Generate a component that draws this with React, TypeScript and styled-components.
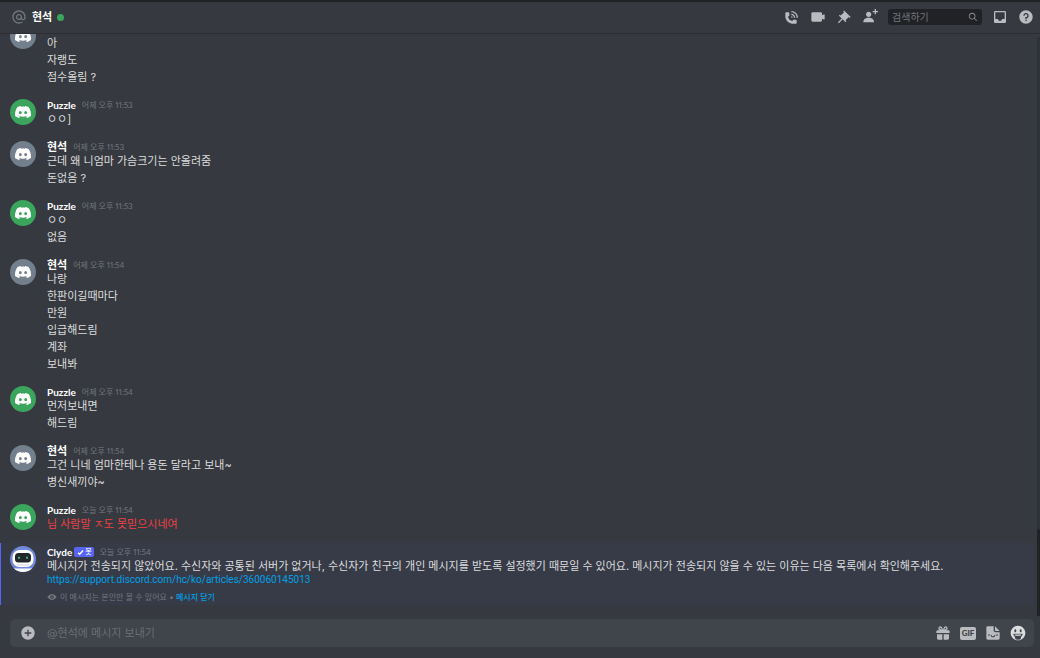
import React from 'react';
import styled, { createGlobalStyle } from 'styled-components';
import { SiDiscord } from 'react-icons/si';

const GlobalStyle = createGlobalStyle`
  * { box-sizing: border-box; }
  body {
    margin: 0;
    background: #36393f;
    color: #dcddde;
    font-family: Inter, "Noto Sans CJK KR", sans-serif;
    font-size: 11px;
    line-height: 14px;
  }
  button, input { font: inherit; color: inherit; border: 0; padding: 0; background: none; outline: none; }
  button { cursor: pointer; display: flex; }
  a { color: #00a0e8; text-decoration: none; }
  svg { display: block; flex: none; }
`;

const Page = styled.div`
  display: flex;
  flex-direction: column;
  height: 100vh;
  border-top: 2px solid #202225;
`;

const Header = styled.header`
  display: flex;
  align-items: center;
  gap: 10px;
  height: 32px;
  flex: none;
  padding: 0 6px 1px 11px;
  border-bottom: 1px solid #2c2e33;
  color: #b9bbbe;
`;

const Title = styled.h1`
  display: flex;
  align-items: center;
  gap: 5px;
  flex: 1;
  margin: 0;
  font-size: 11px;
  line-height: 14px;
  font-weight: 700;
  color: #fff;
`;

const Online = styled.span`
  width: 7px;
  height: 7px;
  border-radius: 50%;
  background: #3ba55d;
`;

const Search = styled.label`
  display: flex;
  align-items: center;
  width: 94px;
  height: 16px;
  padding: 0 4px;
  border-radius: 3px;
  background: #202225;
  color: #8e9297;
  input {
    flex: 1;
    min-width: 0;
    font-size: 10px;
    line-height: 14px;
  }
  input::placeholder { color: #72767d; opacity: 1; }
`;

const Body = styled.div`
  display: flex;
  flex: 1;
  min-height: 0;
`;

const Log = styled.ol`
  display: flex;
  flex-direction: column;
  justify-content: flex-end;
  flex: 1;
  min-width: 0;
  margin: 0;
  padding: 0 0 14px;
  list-style: none;
  overflow: hidden;
`;

const Track = styled.div`
  display: flex;
  flex-direction: column;
  justify-content: flex-end;
  width: 3px;
  margin: 3px 0 3px 3px;
  border-radius: 2px;
  background: #2e3338;
`;

const Thumb = styled.div`
  height: 15%;
  border-radius: 2px;
  background: #202225;
`;

const Group = styled.li<{ $ephemeral?: boolean }>`
  display: flex;
  flex: none;
  gap: 11px;
  padding: 0 10px;
  margin-bottom: 14px;
  ${p => p.$ephemeral && `
    margin: -2px 0 0;
    padding: 2px 10px 1px 9px;
    border-left: 1px solid #5865f2;
    background: #373b47;
  `}
`;

const Avatar = styled.span<{ $color: string }>`
  display: flex;
  align-items: center;
  justify-content: center;
  flex: none;
  width: 26px;
  height: 26px;
  margin-top: 1px;
  border-radius: 50%;
  overflow: hidden;
  background: ${p => p.$color};
  color: #fff;
`;

const Content = styled.div`
  display: flex;
  flex-direction: column;
  flex: 1;
  min-width: 0;
`;

const Head = styled.div`
  display: flex;
  align-items: center;
  height: 14px;
`;

const Author = styled.strong<{ $latin?: boolean }>`
  font-family: Lato, "Noto Sans CJK KR", sans-serif;
  font-size: ${p => (p.$latin ? 10 : 11)}px;
  font-weight: 700;
  color: #fff;
`;

const Time = styled.time`
  margin-left: 6px;
  font-family: Lato, "Noto Sans CJK KR", sans-serif;
  font-size: 8px;
  font-variant-numeric: proportional-nums;
  color: #72767d;
`;

const BotTag = styled.span`
  display: flex;
  align-items: center;
  gap: 1px;
  height: 10px;
  margin-left: 2px;
  padding: 0 2px 0 3px;
  border-radius: 2px;
  background: #5865f2;
  color: #fff;
  font-size: 7px;
  line-height: 10px;
  font-weight: 500;
`;

const Lines = styled.div<{ $failed?: boolean }>`
  display: flex;
  flex-direction: column;
  gap: 3px;
  color: ${p => (p.$failed ? '#ed4245' : '#dcddde')};
  p { margin: 0; }
`;

const ArticleLink = styled.a`
  align-self: flex-start;
  font-family: Roboto, sans-serif;
  font-size: 10px;
`;

const Footnote = styled.div`
  display: flex;
  align-items: center;
  gap: 3px;
  height: 14px;
  margin-top: 3px;
  font-size: 8px;
  color: #72767d;
  a { font-weight: 500; }
`;

const Composer = styled.form`
  display: flex;
  align-items: center;
  gap: 9px;
  flex: none;
  height: 28px;
  margin: 0 6px 11px 10px;
  padding: 0 8px 0 10px;
  border-radius: 5px;
  background: #40444b;
  color: #b9bbbe;
  input {
    flex: 1;
    min-width: 0;
    margin-left: 2px;
    line-height: 14px;
    color: #dcddde;
  }
  input::placeholder { color: #6a6e75; opacity: 1; }
`;

const Gif = styled.span`
  width: 16px;
  height: 13px;
  border-radius: 2px;
  background: #b9bbbe;
  color: #40444b;
  font-family: Lato, sans-serif;
  font-size: 8px;
  line-height: 13px;
  font-weight: 900;
  text-align: center;
`;

const ICONS = {
  at: 'M12 2C6.486 2 2 6.486 2 12C2 17.515 6.486 22 12 22C14.039 22 15.993 21.398 17.652 20.259L16.521 18.611C15.195 19.519 13.633 20 12 20C7.589 20 4 16.411 4 12C4 7.589 7.589 4 12 4C16.411 4 20 7.589 20 12V12.782C20 14.17 19.402 15 18.4 15L18.398 15.018C18.338 15.005 18.273 15 18.209 15H18C17.437 15 16.6 14.182 16.6 13.631V12C16.6 9.464 14.537 7.4 12 7.4C9.463 7.4 7.4 9.463 7.4 12C7.4 14.537 9.463 16.6 12 16.6C13.234 16.6 14.35 16.106 15.177 15.313C15.826 16.269 16.93 17 18 17L18.002 16.981C18.064 16.994 18.129 17 18.195 17H18.4C20.552 17 22 15.306 22 12.782V12C22 6.486 17.514 2 12 2ZM12 14.6C10.566 14.6 9.4 13.433 9.4 12C9.4 10.565 10.566 9.4 12 9.4C13.434 9.4 14.6 10.565 14.6 12C14.6 13.433 13.434 14.6 12 14.6Z',
  call: 'M11 5V3C16.515 3 21 7.486 21 13H19C19 8.589 15.411 5 11 5ZM17 13H15C15 10.795 13.206 9 11 9V7C14.309 7 17 9.691 17 13ZM11 11V13H13C13 11.896 12.105 11 11 11ZM14 16H18C18.553 16 19 16.447 19 17V21C19 21.553 18.553 22 18 22H13C6.925 22 2 17.075 2 11V6C2 5.447 2.448 5 3 5H7C7.553 5 8 5.447 8 6V10C8 10.553 7.553 11 7 11H6C6.063 14.938 9 18 13 18V17C13 16.447 13.447 16 14 16Z',
  video: 'M21.526 8.149C21.231 7.966 20.862 7.951 20.553 8.105L18 9.382V7C18 5.897 17.103 5 16 5H4C2.897 5 2 5.897 2 7V17C2 18.104 2.897 19 4 19H16C17.103 19 18 18.104 18 17V14.618L20.553 15.894C20.694 15.965 20.847 16 21 16C21.183 16 21.365 15.949 21.526 15.851C21.82 15.668 22 15.347 22 15V9C22 8.653 21.82 8.332 21.526 8.149Z',
  pin: 'M22 12L12.101 2.101L10.686 3.514L12.101 4.929L7.151 9.878V9.88L5.736 8.465L4.322 9.88L8.565 14.122L2.908 19.778L4.322 21.192L9.979 15.536L14.222 19.778L15.636 18.364L14.222 16.95L19.171 12H19.172L20.586 13.414L22 12Z',
  addFriend: 'M21 3H24V5H21V8H19V5H16V3H19V0H21V3ZM10 12C12.205 12 14 10.205 14 8C14 5.795 12.205 4 10 4C7.795 4 6 5.795 6 8C6 10.205 7.795 12 10 12ZM10 13C5.289 13 2 15.467 2 19V20H18V19C18 15.467 14.711 13 10 13Z',
  search: 'M21.707 20.293L16.314 14.9C17.403 13.504 18 11.799 18 10C18 7.863 17.167 5.854 15.656 4.344C14.146 2.832 12.137 2 10 2C7.863 2 5.854 2.832 4.344 4.344C2.833 5.854 2 7.863 2 10C2 12.137 2.833 14.146 4.344 15.656C5.854 17.168 7.863 18 10 18C11.799 18 13.504 17.404 14.9 16.314L20.293 21.706L21.707 20.293ZM10 16C8.397 16 6.891 15.376 5.758 14.243C4.624 13.11 4 11.603 4 10C4 8.398 4.624 6.891 5.758 5.758C6.891 4.624 8.397 4 10 4C11.603 4 13.109 4.624 14.242 5.758C15.376 6.891 16 8.398 16 10C16 11.603 15.376 13.11 14.242 14.243C13.109 15.376 11.603 16 10 16Z',
  inbox: 'M19 3H4.99C3.88 3 3.01 3.89 3.01 5L3 19C3 20.1 3.88 21 4.99 21H19C20.1 21 21 20.1 21 19V5C21 3.89 20.1 3 19 3ZM19 15H15C15 16.66 13.65 18 12 18C10.35 18 9 16.66 9 15H4.99V5H19V15Z',
  help: 'M12 2C6.486 2 2 6.487 2 12C2 17.515 6.486 22 12 22C17.514 22 22 17.515 22 12C22 6.487 17.514 2 12 2ZM12 18.25C11.31 18.25 10.75 17.691 10.75 17C10.75 16.31 11.31 15.75 12 15.75C12.69 15.75 13.25 16.31 13.25 17C13.25 17.691 12.69 18.25 12 18.25ZM13 13.875V15H11V12H12C13.104 12 14 11.103 14 10C14 8.896 13.104 8 12 8C10.896 8 10 8.896 10 10H8C8 7.795 9.795 6 12 6C14.205 6 16 7.795 16 10C16 11.861 14.723 13.429 13 13.875Z',
  plus: 'M12 2C6.486 2 2 6.487 2 12C2 17.515 6.486 22 12 22C17.514 22 22 17.515 22 12C22 6.487 17.514 2 12 2ZM17 13H13V17H11V13H7V11H11V7H13V11H17V13Z',
  gift: 'M16.886 8H20C21.104 8 22 8.896 22 10V12H2V10C2 8.896 2.897 8 4 8H7.114C6.663 7.764 6.236 7.477 5.879 7.121C4.709 5.951 4.709 4.048 5.879 2.879C7.012 1.746 8.986 1.746 10.121 2.877C11.758 4.514 11.979 7.595 11.998 7.941L12 8L12.002 7.941C12.022 7.596 12.242 4.515 13.879 2.878C15.014 1.745 16.986 1.746 18.121 2.877C19.29 4.049 19.29 5.952 18.121 7.121C17.764 7.477 17.337 7.764 16.886 8ZM7.293 5.707C6.903 5.316 6.903 4.682 7.293 4.292C7.481 4.103 7.732 4 8 4C8.268 4 8.519 4.103 8.707 4.292C9.297 4.882 9.641 5.94 9.825 6.822C8.945 6.639 7.879 6.293 7.293 5.707ZM14.174 6.824C14.359 5.941 14.702 4.883 15.293 4.293C15.481 4.103 15.732 4 16 4C16.268 4 16.519 4.103 16.706 4.291C17.096 4.682 17.097 5.316 16.707 5.707C16.116 6.298 15.057 6.642 14.174 6.824ZM3 14V20C3 21.102 3.897 22 5 22H11V14H3ZM13 14V22H19C20.104 22 21 21.102 21 20V14H13Z',
  sticker: 'M4 2H13V8C13 9.7 14.3 11 16 11H22V20C22 21.1 21.1 22 20 22H4C2.9 22 2 21.1 2 20V4C2 2.9 2.9 2 4 2ZM15 2L22 9H16.5C15.6 9 15 8.4 15 7.5V2ZM5 14V16H7V14H5ZM17 14V16H19V14H17ZM8.5 15C8.5 17 10 18.5 12 18.5C14 18.5 15.5 17 15.5 15H14C14 16.2 13.1 17 12 17C10.9 17 10 16.2 10 15H8.5Z',
  smile: 'M12 1C5.9 1 1 5.9 1 12C1 18.1 5.9 23 12 23C18.1 23 23 18.1 23 12C23 5.9 18.1 1 12 1ZM8 6.5C9 6.5 9.5 7.5 9.5 8.7C9.5 10 9 11 8 11C7 11 6.5 10 6.5 8.7C6.5 7.5 7 6.5 8 6.5ZM16 6.5C17 6.5 17.5 7.5 17.5 8.7C17.5 10 17 11 16 11C15 11 14.5 10 14.5 8.7C14.5 7.5 15 6.5 16 6.5ZM5 13H19C19 15 18 16.5 16.5 17.5V19C16.5 21 14.5 22 12 22C9.5 22 7.5 21 7.5 19V17.5C6 16.5 5 15 5 13ZM7 14.2C7.2 15 7.7 15.6 8.3 16H15.7C16.3 15.6 16.8 15 17 14.2H7Z',
  eye: 'M12 5C5.648 5 1 12 1 12C1 12 5.648 19 12 19C18.352 19 23 12 23 12C23 12 18.352 5 12 5ZM12 16C9.791 16 8 14.21 8 12C8 9.79 9.791 8 12 8C14.209 8 16 9.79 16 12C16 14.21 14.209 16 12 16ZM12 14C13.1 14 14 13.1 14 12C14 10.9 13.1 10 12 10C10.9 10 10 10.9 10 12C10 13.1 10.9 14 12 14Z',
};

function Icon({ name, size = 16, color = 'currentColor' }: { name: keyof typeof ICONS; size?: number; color?: string }) {
  return (
    <svg width={size} height={size} viewBox="0 0 24 24" fill={color} fillRule="evenodd" aria-hidden="true">
      <path d={ICONS[name]} />
    </svg>
  );
}

function ClydeFace() {
  return (
    <svg width="26" height="26" viewBox="0 0 26 26" aria-hidden="true">
      <path d="M3 22.500h20v4H3z" fill="#fff" />
      <rect x="2.500" y="4" width="21" height="17" rx="7" fill="#fff" />
      <path d="M7 18.500h12v1H7z" fill="#cfd4e0" />
      <rect x="5" y="7" width="16" height="9.500" rx="3.500" fill="#23272a" />
      <rect x="8" y="10.500" width="2" height="2.500" rx="1" fill="#43b581" />
      <rect x="16" y="10.500" width="2" height="2.500" rx="1" fill="#43b581" />
    </svg>
  );
}

type Message = { author: 'Puzzle' | '현석'; time?: string; lines: string[]; failed?: boolean };

const MESSAGES: Message[] = [
  { author: '현석', lines: ['아', '자랭도', '점수올림 ?'] },
  { author: 'Puzzle', time: '어제 오후 11:53', lines: ['ㅇㅇ]'] },
  { author: '현석', time: '어제 오후 11:53', lines: ['근데 왜 니엄마 가슴크기는 안올려줌', '돈없음 ?'] },
  { author: 'Puzzle', time: '어제 오후 11:53', lines: ['ㅇㅇ', '없음'] },
  { author: '현석', time: '어제 오후 11:54', lines: ['나랑', '한판이길때마다', '만원', '입급해드림', '계좌', '보내봐'] },
  { author: 'Puzzle', time: '어제 오후 11:54', lines: ['먼저보내면', '해드림'] },
  { author: '현석', time: '어제 오후 11:54', lines: ['그건 니네 엄마한테나 용돈 달라고 보내~', '병신새끼야~'] },
  { author: 'Puzzle', time: '오늘 오후 11:54', lines: ['님 사람말 ㅈ도 못믿으시네여'], failed: true },
];

const ACTIONS = [
  ['call', '음성 통화 시작하기'],
  ['video', '영상 통화 시작하기'],
  ['pin', '고정된 메시지'],
  ['addFriend', 'DM에 친구 추가하기'],
] as const;

export default function App() {
  return (
    <Page>
      <GlobalStyle />
      <Header>
        <Title>
          <Icon name="at" color="#72767d" />
          현석
          <Online />
        </Title>
        {ACTIONS.map(([name, label]) => (
          <button key={name} type="button" aria-label={label}><Icon name={name} /></button>
        ))}
        <Search>
          <input type="text" placeholder="검색하기" aria-label="검색하기" />
          <Icon name="search" size={10} />
        </Search>
        <button type="button" aria-label="받은 편지함"><Icon name="inbox" /></button>
        <button type="button" aria-label="도움말"><Icon name="help" /></button>
      </Header>

      <Body>
        <Log>
          {MESSAGES.map((m, i) => (
            <Group key={i}>
              <Avatar $color={m.author === 'Puzzle' ? '#3ba55d' : '#747f8d'}><SiDiscord size={16} /></Avatar>
              <Content>
                <Head>
                  {m.time && <Author $latin={m.author === 'Puzzle'}>{m.author}</Author>}
                  {m.time && <Time>{m.time}</Time>}
                </Head>
                <Lines $failed={m.failed}>
                  {m.lines.map(line => <p key={line}>{line}</p>)}
                </Lines>
              </Content>
            </Group>
          ))}
          <Group $ephemeral>
            <Avatar $color="#7289da"><ClydeFace /></Avatar>
            <Content>
              <Head>
                <Author $latin>Clyde</Author>
                <BotTag>
                  <svg width="7" height="7" viewBox="0 0 7 7" fill="none" stroke="#fff" strokeWidth="1.300" aria-hidden="true">
                    <path d="M1 3.7 2.7 5.3 6 1.5" />
                  </svg>
                  봇
                </BotTag>
                <Time>오늘 오후 11:54</Time>
              </Head>
              <div>메시지가 전송되지 않았어요. 수신자와 공통된 서버가 없거나, 수신자가 친구의 개인 메시지를 받도록 설정했기 때문일 수 있어요. 메시지가 전송되지 않을 수 있는 이유는 다음 목록에서 확인해주세요.</div>
              <ArticleLink href="https://support.discord.com/hc/ko/articles/360060145013">https://support.discord.com/hc/ko/articles/360060145013</ArticleLink>
              <Footnote>
                <Icon name="eye" size={10} />
                <span>이 메시지는 본인만 볼 수 있어요 • <a href="#dismiss">메시지 닫기</a></span>
              </Footnote>
            </Content>
          </Group>
        </Log>
        <Track><Thumb /></Track>
      </Body>

      <Composer>
        <button type="button" aria-label="파일 첨부"><Icon name="plus" /></button>
        <input type="text" placeholder="@현석에 메시지 보내기" aria-label="@현석에 메시지 보내기" />
        <button type="button" aria-label="선물 보내기"><Icon name="gift" /></button>
        <button type="button" aria-label="GIF 선택"><Gif>GIF</Gif></button>
        <button type="button" aria-label="스티커 선택"><Icon name="sticker" /></button>
        <button type="button" aria-label="이모티콘 선택"><Icon name="smile" color="#dcddde" /></button>
      </Composer>
    </Page>
  );
}
